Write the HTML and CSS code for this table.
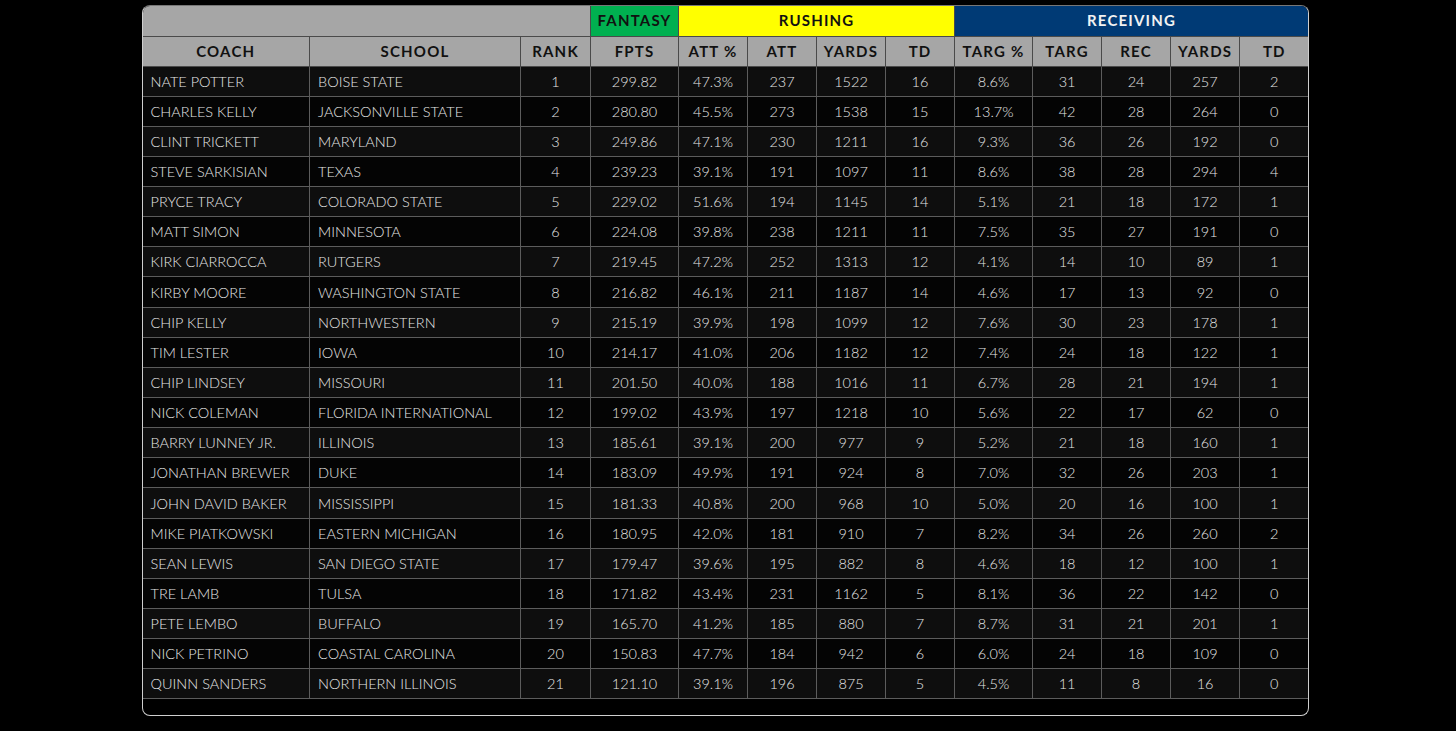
FILE: index.html
```html
<!DOCTYPE html>
<html>
<head>
<meta charset="utf-8">
<link rel="stylesheet" href="styles.css">
</head>
<body>
<div class="frame">
<table class="stats">
<colgroup>
<col class="w-coach"><col class="w-school"><col class="w-rank"><col class="w-fpts">
<col class="w-s"><col class="w-s"><col class="w-s"><col class="w-s">
<col class="w-targp"><col class="w-s"><col class="w-s"><col class="w-s"><col class="w-s">
</colgroup>
<thead>
<tr class="groups">
<th colspan="3" class="g-blank"></th>
<th class="g-fantasy">FANTASY</th>
<th colspan="4" class="g-rushing">RUSHING</th>
<th colspan="5" class="g-receiving">RECEIVING</th>
</tr>
<tr class="cols">
<th>COACH</th><th>SCHOOL</th><th>RANK</th><th>FPTS</th>
<th>ATT %</th><th>ATT</th><th>YARDS</th><th>TD</th>
<th>TARG %</th><th>TARG</th><th>REC</th><th>YARDS</th><th>TD</th>
</tr>
</thead>
<tbody>
<tr><td class="l">NATE POTTER</td><td class="l">BOISE STATE</td><td>1</td><td>299.82</td><td>47.3%</td><td>237</td><td>1522</td><td>16</td><td>8.6%</td><td>31</td><td>24</td><td>257</td><td>2</td></tr>
<tr><td class="l">CHARLES KELLY</td><td class="l">JACKSONVILLE STATE</td><td>2</td><td>280.80</td><td>45.5%</td><td>273</td><td>1538</td><td>15</td><td>13.7%</td><td>42</td><td>28</td><td>264</td><td>0</td></tr>
<tr><td class="l">CLINT TRICKETT</td><td class="l">MARYLAND</td><td>3</td><td>249.86</td><td>47.1%</td><td>230</td><td>1211</td><td>16</td><td>9.3%</td><td>36</td><td>26</td><td>192</td><td>0</td></tr>
<tr><td class="l">STEVE SARKISIAN</td><td class="l">TEXAS</td><td>4</td><td>239.23</td><td>39.1%</td><td>191</td><td>1097</td><td>11</td><td>8.6%</td><td>38</td><td>28</td><td>294</td><td>4</td></tr>
<tr><td class="l">PRYCE TRACY</td><td class="l">COLORADO STATE</td><td>5</td><td>229.02</td><td>51.6%</td><td>194</td><td>1145</td><td>14</td><td>5.1%</td><td>21</td><td>18</td><td>172</td><td>1</td></tr>
<tr><td class="l">MATT SIMON</td><td class="l">MINNESOTA</td><td>6</td><td>224.08</td><td>39.8%</td><td>238</td><td>1211</td><td>11</td><td>7.5%</td><td>35</td><td>27</td><td>191</td><td>0</td></tr>
<tr><td class="l">KIRK CIARROCCA</td><td class="l">RUTGERS</td><td>7</td><td>219.45</td><td>47.2%</td><td>252</td><td>1313</td><td>12</td><td>4.1%</td><td>14</td><td>10</td><td>89</td><td>1</td></tr>
<tr><td class="l">KIRBY MOORE</td><td class="l">WASHINGTON STATE</td><td>8</td><td>216.82</td><td>46.1%</td><td>211</td><td>1187</td><td>14</td><td>4.6%</td><td>17</td><td>13</td><td>92</td><td>0</td></tr>
<tr><td class="l">CHIP KELLY</td><td class="l">NORTHWESTERN</td><td>9</td><td>215.19</td><td>39.9%</td><td>198</td><td>1099</td><td>12</td><td>7.6%</td><td>30</td><td>23</td><td>178</td><td>1</td></tr>
<tr><td class="l">TIM LESTER</td><td class="l">IOWA</td><td>10</td><td>214.17</td><td>41.0%</td><td>206</td><td>1182</td><td>12</td><td>7.4%</td><td>24</td><td>18</td><td>122</td><td>1</td></tr>
<tr><td class="l">CHIP LINDSEY</td><td class="l">MISSOURI</td><td>11</td><td>201.50</td><td>40.0%</td><td>188</td><td>1016</td><td>11</td><td>6.7%</td><td>28</td><td>21</td><td>194</td><td>1</td></tr>
<tr><td class="l">NICK COLEMAN</td><td class="l">FLORIDA INTERNATIONAL</td><td>12</td><td>199.02</td><td>43.9%</td><td>197</td><td>1218</td><td>10</td><td>5.6%</td><td>22</td><td>17</td><td>62</td><td>0</td></tr>
<tr><td class="l">BARRY LUNNEY JR.</td><td class="l">ILLINOIS</td><td>13</td><td>185.61</td><td>39.1%</td><td>200</td><td>977</td><td>9</td><td>5.2%</td><td>21</td><td>18</td><td>160</td><td>1</td></tr>
<tr><td class="l">JONATHAN BREWER</td><td class="l">DUKE</td><td>14</td><td>183.09</td><td>49.9%</td><td>191</td><td>924</td><td>8</td><td>7.0%</td><td>32</td><td>26</td><td>203</td><td>1</td></tr>
<tr><td class="l">JOHN DAVID BAKER</td><td class="l">MISSISSIPPI</td><td>15</td><td>181.33</td><td>40.8%</td><td>200</td><td>968</td><td>10</td><td>5.0%</td><td>20</td><td>16</td><td>100</td><td>1</td></tr>
<tr><td class="l">MIKE PIATKOWSKI</td><td class="l">EASTERN MICHIGAN</td><td>16</td><td>180.95</td><td>42.0%</td><td>181</td><td>910</td><td>7</td><td>8.2%</td><td>34</td><td>26</td><td>260</td><td>2</td></tr>
<tr><td class="l">SEAN LEWIS</td><td class="l">SAN DIEGO STATE</td><td>17</td><td>179.47</td><td>39.6%</td><td>195</td><td>882</td><td>8</td><td>4.6%</td><td>18</td><td>12</td><td>100</td><td>1</td></tr>
<tr><td class="l">TRE LAMB</td><td class="l">TULSA</td><td>18</td><td>171.82</td><td>43.4%</td><td>231</td><td>1162</td><td>5</td><td>8.1%</td><td>36</td><td>22</td><td>142</td><td>0</td></tr>
<tr><td class="l">PETE LEMBO</td><td class="l">BUFFALO</td><td>19</td><td>165.70</td><td>41.2%</td><td>185</td><td>880</td><td>7</td><td>8.7%</td><td>31</td><td>21</td><td>201</td><td>1</td></tr>
<tr><td class="l">NICK PETRINO</td><td class="l">COASTAL CAROLINA</td><td>20</td><td>150.83</td><td>47.7%</td><td>184</td><td>942</td><td>6</td><td>6.0%</td><td>24</td><td>18</td><td>109</td><td>0</td></tr>
<tr><td class="l">QUINN SANDERS</td><td class="l">NORTHERN ILLINOIS</td><td>21</td><td>121.10</td><td>39.1%</td><td>196</td><td>875</td><td>5</td><td>4.5%</td><td>11</td><td>8</td><td>16</td><td>0</td></tr>
</tbody>
</table>
</div>
</body>
</html>
```

FILE: styles.css
```css
html, body {
  margin: 0;
  padding: 0;
  background: #000;
}
body {
  font-family: "Lato", "Liberation Sans", sans-serif;
  padding-top: 5px;
}
.frame {
  margin-left: 142px;
  width: 1165px;
  border: 1px solid #cfcfcf;
  border-top-color: #777;
  border-radius: 8px;
  overflow: hidden;
  padding-bottom: 16px;
  background: #000;
}
.stats {
  width: 1166px;
  border-collapse: collapse;
  table-layout: fixed;
  margin-left: -1px;
  margin-top: -1px;
}
.w-coach { width: 167px; }
.w-school { width: 211px; }
.w-rank { width: 70px; }
.w-fpts { width: 88px; }
.w-s { width: 69px; }
.w-targp { width: 78px; }

.stats th, .stats td {
  padding: 0;
  box-sizing: border-box;
  text-align: center;
  white-space: nowrap;
}
.groups th {
  height: 31px;
  font-size: 15px;
  font-weight: 700;
  letter-spacing: 1.2px;
  color: #111;
  border: 1px solid #4a4a4a;
  border-top: 0;
}
.g-blank { background: #a6a6a6; border-left: 0; }
.g-fantasy { background: #00b050; }
.g-rushing { background: #ffff00; }
.g-receiving { background: #003a75; color: #f2f2f2 !important; border-right: 0; }
.cols th {
  background: #a6a6a6;
  color: #111;
  font-size: 15px;
  font-weight: 700;
  letter-spacing: 1.2px;
  border: 1px solid #4a4a4a;
  height: 30px;
}
.cols th:first-child { border-left: 0; }
.cols th:last-child { border-right: 0; }
.stats td {
  color: #e6e6e6;
  font-size: 14.5px;
  font-weight: 300;
  border: 1px solid #5c5c5c;
  height: 30.15px;
}
.stats td:first-child { border-left: 0; }
.stats td:last-child { border-right: 0; }
.stats tbody tr:nth-child(odd) td { background: #0e0e0e; }
.stats tbody tr:nth-child(even) td { background: #040404; }
.stats td.l {
  text-align: left;
  padding-left: 8px;
}
```
